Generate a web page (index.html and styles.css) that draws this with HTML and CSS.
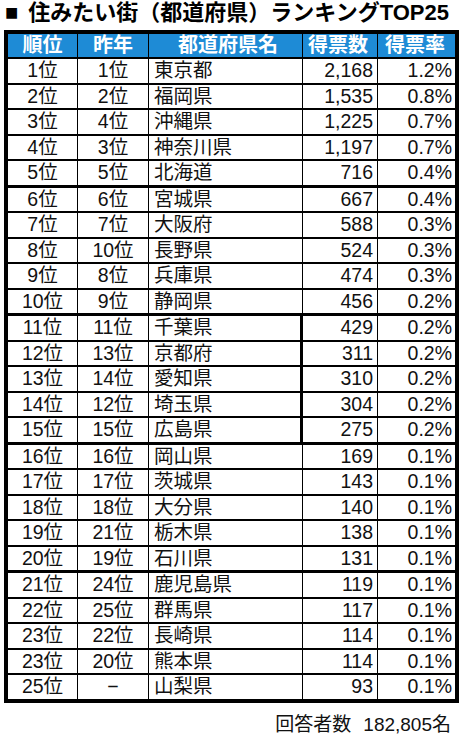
FILE: index.html
```html
<!DOCTYPE html>
<html lang="ja">
<head>
<meta charset="utf-8">
<link rel="stylesheet" href="styles.css">
</head>
<body>
<h1 class="title"><span class="sq">■</span>住みたい街（都道府県）ランキングTOP25</h1>
<div class="table">
  <div class="row head">
    <div class="c c1">順位</div><div class="c c2">昨年</div><div class="c c3">都道府県名</div><div class="c c4">得票数</div><div class="c c5">得票率</div>
  </div>
  <div class="row"><div class="c c1">1位</div><div class="c c2">1位</div><div class="c c3">東京都</div><div class="c c4">2,168</div><div class="c c5">1.2%</div></div>
  <div class="row"><div class="c c1">2位</div><div class="c c2">2位</div><div class="c c3">福岡県</div><div class="c c4">1,535</div><div class="c c5">0.8%</div></div>
  <div class="row"><div class="c c1">3位</div><div class="c c2">4位</div><div class="c c3">沖縄県</div><div class="c c4">1,225</div><div class="c c5">0.7%</div></div>
  <div class="row"><div class="c c1">4位</div><div class="c c2">3位</div><div class="c c3">神奈川県</div><div class="c c4">1,197</div><div class="c c5">0.7%</div></div>
  <div class="row thick"><div class="c c1">5位</div><div class="c c2">5位</div><div class="c c3">北海道</div><div class="c c4">716</div><div class="c c5">0.4%</div></div>
  <div class="row"><div class="c c1">6位</div><div class="c c2">6位</div><div class="c c3">宮城県</div><div class="c c4">667</div><div class="c c5">0.4%</div></div>
  <div class="row"><div class="c c1">7位</div><div class="c c2">7位</div><div class="c c3">大阪府</div><div class="c c4">588</div><div class="c c5">0.3%</div></div>
  <div class="row"><div class="c c1">8位</div><div class="c c2">10位</div><div class="c c3">長野県</div><div class="c c4">524</div><div class="c c5">0.3%</div></div>
  <div class="row"><div class="c c1">9位</div><div class="c c2">8位</div><div class="c c3">兵庫県</div><div class="c c4">474</div><div class="c c5">0.3%</div></div>
  <div class="row thick"><div class="c c1">10位</div><div class="c c2">9位</div><div class="c c3">静岡県</div><div class="c c4">456</div><div class="c c5">0.2%</div></div>
  <div class="row bold3"><div class="c c1">11位</div><div class="c c2">11位</div><div class="c c3">千葉県</div><div class="c c4">429</div><div class="c c5">0.2%</div></div>
  <div class="row bold3"><div class="c c1">12位</div><div class="c c2">13位</div><div class="c c3">京都府</div><div class="c c4">311</div><div class="c c5">0.2%</div></div>
  <div class="row bold3"><div class="c c1">13位</div><div class="c c2">14位</div><div class="c c3">愛知県</div><div class="c c4">310</div><div class="c c5">0.2%</div></div>
  <div class="row bold3"><div class="c c1">14位</div><div class="c c2">12位</div><div class="c c3">埼玉県</div><div class="c c4">304</div><div class="c c5">0.2%</div></div>
  <div class="row bold3 thick"><div class="c c1">15位</div><div class="c c2">15位</div><div class="c c3">広島県</div><div class="c c4">275</div><div class="c c5">0.2%</div></div>
  <div class="row"><div class="c c1">16位</div><div class="c c2">16位</div><div class="c c3">岡山県</div><div class="c c4">169</div><div class="c c5">0.1%</div></div>
  <div class="row"><div class="c c1">17位</div><div class="c c2">17位</div><div class="c c3">茨城県</div><div class="c c4">143</div><div class="c c5">0.1%</div></div>
  <div class="row"><div class="c c1">18位</div><div class="c c2">18位</div><div class="c c3">大分県</div><div class="c c4">140</div><div class="c c5">0.1%</div></div>
  <div class="row"><div class="c c1">19位</div><div class="c c2">21位</div><div class="c c3">栃木県</div><div class="c c4">138</div><div class="c c5">0.1%</div></div>
  <div class="row thick"><div class="c c1">20位</div><div class="c c2">19位</div><div class="c c3">石川県</div><div class="c c4">131</div><div class="c c5">0.1%</div></div>
  <div class="row"><div class="c c1">21位</div><div class="c c2">24位</div><div class="c c3">鹿児島県</div><div class="c c4">119</div><div class="c c5">0.1%</div></div>
  <div class="row"><div class="c c1">22位</div><div class="c c2">25位</div><div class="c c3">群馬県</div><div class="c c4">117</div><div class="c c5">0.1%</div></div>
  <div class="row"><div class="c c1">23位</div><div class="c c2">22位</div><div class="c c3">長崎県</div><div class="c c4">114</div><div class="c c5">0.1%</div></div>
  <div class="row"><div class="c c1">23位</div><div class="c c2">20位</div><div class="c c3">熊本県</div><div class="c c4">114</div><div class="c c5">0.1%</div></div>
  <div class="row last"><div class="c c1">25位</div><div class="c c2">−</div><div class="c c3">山梨県</div><div class="c c4">93</div><div class="c c5">0.1%</div></div>
</div>
<p class="footer"><span>回答者数</span><span class="num">182,805名</span></p>
</body>
</html>
```

FILE: styles.css
```css
html, body {
  margin: 0;
  padding: 0;
  background: #fff;
}
body {
  font-family: "Liberation Sans", "Noto Sans CJK JP", sans-serif;
  color: #111;
}
.title {
  margin: 0;
  padding: 0 0 0 5px;
  height: 30px;
  font-size: 22px;
  line-height: 26px;
  font-weight: bold;
  color: #000;
  white-space: nowrap;
}
.sq {
  margin-right: 10px;
}
.table {
  margin-left: 4px;
  width: 455px;
  box-sizing: border-box;
  border: 4px solid #000;
}
.row {
  display: grid;
  grid-template-columns: 70px 71px 154px 75px 77px;
  height: 25.5px;
  box-sizing: border-box;
  border-bottom: 2px solid #000;
}
.row.thick {
  height: 26.5px;
  border-bottom-width: 3px;
}
.row.last {
  height: 23.5px;
  border-bottom: none;
}
.row.head {
  height: 25px;
  background: #1e8bd6;
  color: #fff;
  font-weight: bold;
}
.c {
  box-sizing: border-box;
  border-right: 1px solid #000;
  font-size: 19.5px;
  line-height: 23.5px;
  white-space: nowrap;
  overflow: hidden;
}
.head .c {
  line-height: 23px;
  font-size: 20px;
  text-align: center;
}
.c1, .c2 {
  text-align: center;
}
.c3 {
  text-align: left;
  padding-left: 5px;
}
.c4 {
  text-align: right;
  padding-right: 4px;
}
.c5 {
  text-align: right;
  padding-right: 3px;
  border-right: none;
}
.bold3 .c3 {
  border-right-width: 3px;
}
.footer {
  margin: 10px 0 0;
  padding-right: 13px;
  text-align: right;
  font-size: 19px;
  line-height: 24px;
  color: #111;
}
.footer .num {
  margin-left: 12px;
}
```
